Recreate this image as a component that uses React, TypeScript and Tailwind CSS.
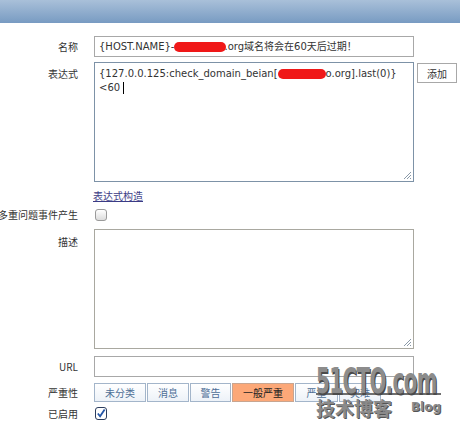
import React from 'react'

const latin = "font-['DejaVu_Sans','Noto_Sans_CJK_SC',sans-serif]"
const cjk = "font-['Noto_Sans_CJK_SC',sans-serif]"

interface RowProps {
  label: string
  top?: string
  className?: string
  children: React.ReactNode
}

const Row: React.FC<RowProps> = ({ label, top = 'items-center', className = '', children }) => {
  return (
    <div className={`flex ${className}`}>
      <div className={`w-[78px] shrink-0 flex justify-end whitespace-nowrap text-[10px] leading-[12px] text-[#333] ${cjk} ${top}`}>
        {label}
      </div>
      <div className="ml-4 flex items-start">{children}</div>
    </div>
  )
}

const Redact: React.FC<{ w: string }> = ({ w }) => (
  <span className={`inline-block h-[10px] ${w} rounded-full bg-[#f01818] align-middle`} />
)

const Grip = () => (
  <svg className="absolute right-[1px] bottom-[1px]" width="9" height="9" viewBox="0 0 9 9">
    <path d="M8 1 L1 8 M8 4 L4 8 M8 7 L7 8" stroke="#8a99a8" strokeWidth="1" />
  </svg>
)

const Checkbox: React.FC<{ checked?: boolean }> = ({ checked }) =>
  checked ? (
    <div className="w-[12px] h-[13px] rounded-[3px] border border-[#2c3d5e] bg-white flex items-center justify-center">
      <svg width="11" height="11" viewBox="0 0 11 11">
        <path d="M2 5.5 L4.5 8.5 L9.5 1" stroke="#2557a8" strokeWidth="2" fill="none" />
      </svg>
    </div>
  ) : (
    <div className="w-[12px] h-[12px] rounded-[3px] border border-[#9a9a9a] bg-gradient-to-b from-white to-[#dcdcdc]" />
  )

const severities = [
  { name: '未分类', w: 'w-[52px]' },
  { name: '消息', w: 'w-[42px]' },
  { name: '警告', w: 'w-[41px]' },
  { name: '一般严重', w: 'w-[62px]', active: true },
  { name: '严重', w: 'w-[43px]' },
  { name: '灾难', w: 'w-[42px]' },
]

export default function App() {
  return (
    <div className="relative w-[460px] h-[436px] overflow-hidden bg-white">
      <div className="h-[23px] bg-gradient-to-b from-[#a9c0d9] to-[#789bc2]" />

      <div className="flex flex-col">
        <Row label="名称" className="mt-[13px]">
          <div className={`w-[320px] h-[21px] border border-[#a8a8a8] px-[4px] flex items-center text-[10px] text-[#333] whitespace-nowrap ${latin}`}>
            {'{HOST.NAME}-'}
            <Redact w="w-[52px]" />
            <span className="-ml-[2px]">.org域名将会在60天后过期！</span>
          </div>
        </Row>

        <Row label="表达式" top="items-start pt-[6px]" className="mt-[5px]">
          <div className={`relative w-[320px] h-[120px] border border-[#7d92a7] px-[4px] pt-[4px] text-[10px] leading-[14px] text-[#333] ${latin}`}>
            <div className="whitespace-nowrap">
              {'{127.0.0.125:check_domain_beian['}
              <Redact w="w-[48px]" />
              {'o.org].last(0)}'}
            </div>
            <div className="flex items-center">
              {'<60'}
              <span className="ml-[3px] inline-block w-px h-[12px] bg-black" />
            </div>
            <Grip />
          </div>
          <button className={`ml-[3px] mt-[1px] w-[40px] h-[20px] border border-[#a8a8a8] bg-white text-[10px] text-[#333] ${cjk}`}>
            添加
          </button>
        </Row>

        <Row label="" className="mt-[8px]">
          <a className={`text-[10px] leading-[12px] text-[#3b3b85] underline -ml-px ${cjk}`}>表达式构造</a>
        </Row>

        <Row label="多重问题事件产生" className="mt-[7px]">
          <div className="ml-px">
            <Checkbox />
          </div>
        </Row>

        <Row label="描述" top="items-start pt-[7px]" className="mt-[8px]">
          <div className="relative w-[320px] h-[120px] border border-[#a9a8a0]">
            <Grip />
          </div>
        </Row>

        <Row label="URL" className="mt-[7px]">
          <div className="w-[320px] h-[21px] border border-[#a8a8a8]" />
        </Row>

        <Row label="严重性" className="mt-[6px]">
          <div className="flex gap-px">
            {severities.map((s) => (
              <div
                key={s.name}
                className={`${s.w} h-[19px] flex items-center justify-center border text-[10px] ${cjk} ${
                  s.active
                    ? 'bg-[#fca878] border-[#c8a590] text-[#222]'
                    : 'bg-gradient-to-b from-white to-[#edf2f8] border-[#a3b5ca] text-[#4d6e96]'
                }`}
              >
                {s.name}
              </div>
            ))}
          </div>
        </Row>

        <Row label="已启用" className="mt-[5px]">
          <div className="ml-px">
            <Checkbox checked />
          </div>
        </Row>
      </div>

      {/* 51CTO watermark */}
      <div className="absolute left-[316px] top-[367px] w-[125px] pointer-events-none">
        <div className="h-[26px] overflow-visible">
          <div className="origin-top scale-y-[1.65] font-['DejaVu_Sans_Condensed',sans-serif] font-bold text-[22px] leading-[17px] text-[#8c8c8c] tracking-[-0.5px] [text-shadow:1px_1px_0_#4a4a4a]">
            51CTO.com
          </div>
        </div>
        <div className="h-[2px] bg-[#6f6f6f]" />
        <div className="flex items-end justify-between mt-[3px]">
          <span className={`text-[19px] leading-[20px] font-bold text-[#8a8a8a] [text-shadow:1px_1px_0_#555] ${cjk}`}>技术博客</span>
          <span className="font-['DejaVu_Sans',sans-serif] font-bold text-[12px] leading-[14px] text-[#8a8a8a] mb-[4px] [text-shadow:1px_1px_0_#555]">Blog</span>
        </div>
      </div>
    </div>
  )
}
